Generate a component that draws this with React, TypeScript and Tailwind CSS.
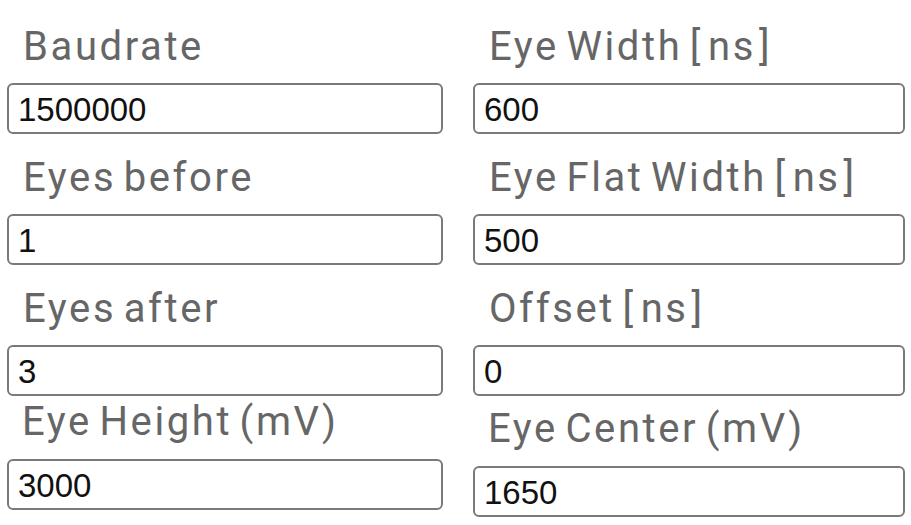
import React from "react";

interface Field {
  label: string;
  value: string;
  labelClass?: string;
}

const leftFields: Field[] = [
  { label: "Baudrate", value: "1500000" },
  { label: "Eyes before", value: "1" },
  { label: "Eyes after", value: "3" },
  { label: "Eye Height (mV)", value: "3000", labelClass: "h-[63px] pt-[6px] pl-[15px]" },
];

const rightFields: Field[] = [
  { label: "Eye Width [ns]", value: "600" },
  { label: "Eye Flat Width [ns]", value: "500" },
  { label: "Offset [ns]", value: "0" },
  { label: "Eye Center (mV)", value: "1650", labelClass: "h-[70px] pt-[13px] pl-[15px]" },
];

// brackets in the original sit a bit apart from the unit
const renderLabel = (label: string) => {
  const m = label.match(/^(.*)\[(.*)\]$/);
  if (!m) return label;
  return (
    <>
      {m[1]}
      <span className="mr-[5px]">[</span>
      {m[2]}
      <span className="ml-[3px]">]</span>
    </>
  );
};

const FieldBox: React.FC<{ field: Field }> = ({ field }) => (
  <div className="flex flex-col">
    <div
      className={
        "text-[40px] leading-[40px] text-[#666] tracking-[2.6px] [word-spacing:-5px] whitespace-nowrap " +
        (field.labelClass ?? "h-[80px] pt-[24px] pl-[16px]")
      }
      style={{ fontFamily: "Roboto, 'Noto Sans', sans-serif" }}
    >
      {renderLabel(field.label)}
    </div>
    <input
      readOnly
      value={field.value}
      className="h-[51px] w-full border-2 border-[#7a7a7a] rounded-[6px] bg-white px-[9px] pt-[3px] text-[33px] text-[#111] outline-none"
      style={{ fontFamily: "'Liberation Sans', Arial, sans-serif" }}
    />
  </div>
);

export default function App() {
  return (
    <div className="w-[911px] h-[525px] bg-white overflow-hidden">
      <div className="grid grid-cols-[436px_432px] gap-x-[30px] pl-[7px] pt-[3px]">
        <div className="flex flex-col">
          {leftFields.map((f) => (
            <FieldBox key={f.label} field={f} />
          ))}
        </div>
        <div className="flex flex-col">
          {rightFields.map((f) => (
            <FieldBox key={f.label} field={f} />
          ))}
        </div>
      </div>
    </div>
  );
}
